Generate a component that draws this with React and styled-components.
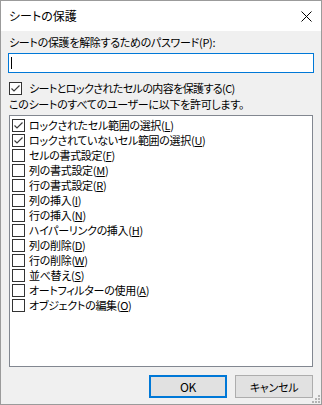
import React from "react";
import styled, { createGlobalStyle } from "styled-components";

const GlobalStyle = createGlobalStyle`
  html, body { margin: 0; padding: 0; background: #f0f0f0; }
  body {
    font-family: "Noto Sans CJK JP", "Noto Sans", sans-serif;
    font-size: 11px;
    color: #000;
  }
  * { box-sizing: border-box; }
`;

const Window = styled.div`
  position: relative;
  width: 322px;
  height: 405px;
  border: 1px solid #9b9b9b;
  background: #f0f0f0;
  display: flex;
  flex-direction: column;
  font-feature-settings: "palt";
  letter-spacing: -0.3px;
`;

const TitleBar = styled.div`
  height: 30px;
  flex: none;
  background: #fff;
  display: flex;
  align-items: center;
  justify-content: space-between;
  padding: 0 9px 0 8px;
`;

const Title = styled.span`
  font-size: 12px;
  letter-spacing: 0;
  line-height: 16px;
  margin-top: -1px;
`;

const CloseIcon = styled.svg`
  width: 11px;
  height: 11px;
  display: block;
`;

const Body = styled.div`
  flex: 1;
  display: flex;
  flex-direction: column;
  padding: 0 7px;
`;

const Label = styled.div`
  line-height: 16px;
  height: 16px;
  padding-left: 1px;
  margin-top: ${(p) => p.$mt || 0}px;
  white-space: nowrap;
`;

const Input = styled.div`
  margin-top: 3px;
  height: 20px;
  border: 1px solid #0078d7;
  background: #fff;
  display: flex;
  align-items: center;
  padding-left: 2px;
`;

const Caret = styled.span`
  width: 1px;
  height: 12px;
  background: #000;
`;

const CheckRow = styled.div`
  display: flex;
  align-items: center;
  gap: ${(p) => p.$gap || 5}px;
  height: ${(p) => p.$h || 16}px;
  white-space: nowrap;
  margin-top: ${(p) => p.$mt || 0}px;
  padding-left: ${(p) => p.$pl || 0}px;
`;

const RowText = styled.span`
  display: block;
  height: ${(p) => p.$h || 16}px;
  line-height: ${(p) => p.$h || 16}px;
  letter-spacing: ${(p) => (p.$tight ? -0.6 : -0.3)}px;
`;

const Box = styled.span`
  width: 13px;
  height: 13px;
  flex: none;
  border: 1px solid #333;
  background: #fff;
  display: flex;
  align-items: center;
  justify-content: center;
`;

const List = styled.div`
  margin: 3px 1px 0;
  height: 252px;
  flex: none;
  background: #fff;
  border: 1px solid #828790;
  padding: 2px 0 0 2px;
  display: flex;
  flex-direction: column;
`;

const Mnemonic = styled.span`
  text-decoration: underline;
  text-underline-offset: 1px;
`;

const Buttons = styled.div`
  margin: 8px 1px 0;
  display: flex;
  justify-content: flex-end;
  gap: 8px;
`;

const Button = styled.div`
  width: 78px;
  height: 23px;
  display: flex;
  align-items: center;
  justify-content: center;
  background: #e1e1e1;
  border: ${(p) => (p.$primary ? "2px solid #0078d7" : "1px solid #adadad")};
  font-size: ${(p) => (p.$primary ? 12 : 11)}px;
`;

const Grip = styled.svg`
  position: absolute;
  right: 1px;
  bottom: 1px;
  width: 8px;
  height: 8px;
`;

const Check = () => (
  <svg width="11" height="11" viewBox="0 0 11 11">
    <polyline
      points="1.5,5.5 4,8 9.5,2.5"
      fill="none"
      stroke="#3c3c3c"
      strokeWidth="1.2"
    />
  </svg>
);

const CheckBox = ({ checked }) => <Box>{checked && <Check />}</Box>;

const items = [
  ["ロックされたセル範囲の選択", "L", true],
  ["ロックされていないセル範囲の選択", "U", true],
  ["セルの書式設定", "F", false],
  ["列の書式設定", "M", false],
  ["行の書式設定", "R", false],
  ["列の挿入", "I", false],
  ["行の挿入", "N", false],
  ["ハイパーリンクの挿入", "H", false],
  ["列の削除", "D", false],
  ["行の削除", "W", false],
  ["並べ替え", "S", false],
  ["オートフィルターの使用", "A", false],
  ["オブジェクトの編集", "O", false],
];

export default function App() {
  return (
    <>
      <GlobalStyle />
      <Window>
        <TitleBar>
          <Title>シートの保護</Title>
          <CloseIcon viewBox="0 0 11 11">
            <path d="M0.5 0.5 L10.5 10.5 M10.5 0.5 L0.5 10.5" stroke="#000" strokeWidth="1" />
          </CloseIcon>
        </TitleBar>
        <Body>
          <Label $mt={3}>シートの保護を解除するためのパスワード(P):</Label>
          <Input>
            <Caret />
          </Input>
          <CheckRow $mt={7} $pl={1} $gap={7}>
            <CheckBox checked />
            <RowText $tight>シートとロックされたセルの内容を保護する(C)</RowText>
          </CheckRow>
          <Label $mt={0}>このシートのすべてのユーザーに以下を許可します。</Label>
          <List>
            {items.map(([text, key, checked]) => (
              <CheckRow key={key} $h={15} $gap={4}>
                <CheckBox checked={checked} />
                <RowText $h={15}>
                  {text}(<Mnemonic>{key}</Mnemonic>)
                </RowText>
              </CheckRow>
            ))}
          </List>
          <Buttons>
            <Button $primary>OK</Button>
            <Button>キャンセル</Button>
          </Buttons>
        </Body>
        <Grip viewBox="0 0 8 8">
          <rect x="6" y="0" width="2" height="2" fill="#b4b4b4" />
          <rect x="3" y="3" width="2" height="2" fill="#b4b4b4" />
          <rect x="6" y="3" width="2" height="2" fill="#b4b4b4" />
          <rect x="0" y="6" width="2" height="2" fill="#b4b4b4" />
          <rect x="3" y="6" width="2" height="2" fill="#b4b4b4" />
          <rect x="6" y="6" width="2" height="2" fill="#b4b4b4" />
        </Grip>
      </Window>
    </>
  );
}
